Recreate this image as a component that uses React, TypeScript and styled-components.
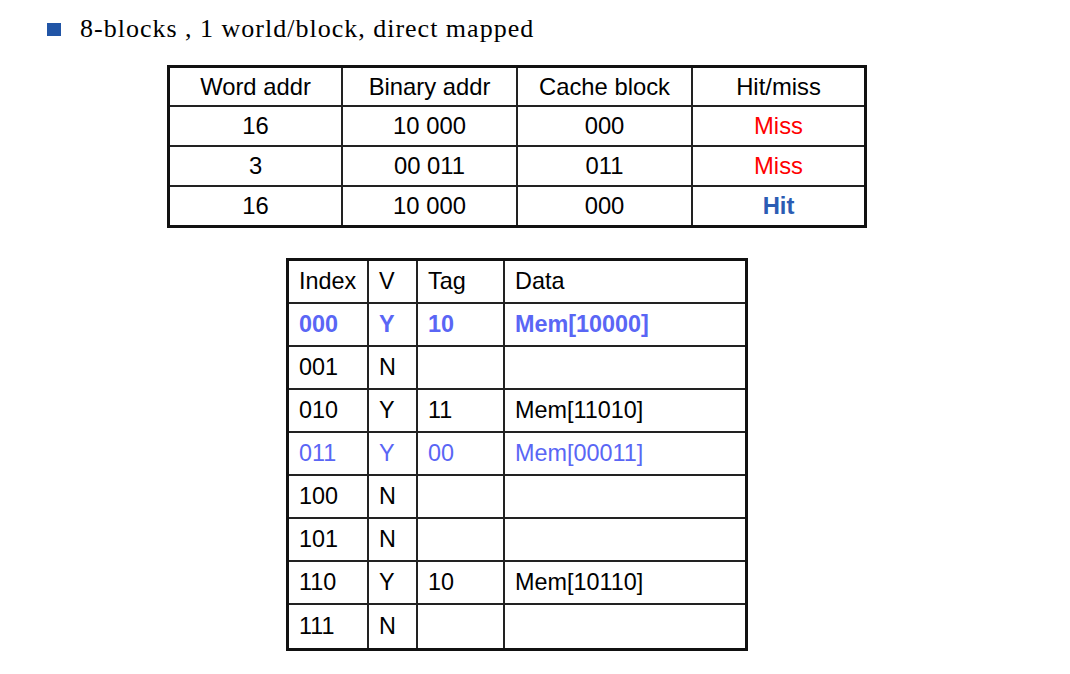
import React from "react";
import styled, { createGlobalStyle } from "styled-components";

const GlobalStyle = createGlobalStyle`
  html, body {
    margin: 0;
    padding: 0;
    background: #ffffff;
  }
`;

const lookups = [
  { word: "16", binary: "10 000", block: "000", result: "Miss" },
  { word: "3", binary: "00 011", block: "011", result: "Miss" },
  { word: "16", binary: "10 000", block: "000", result: "Hit" },
];

const cache = [
  { index: "000", valid: "Y", tag: "10", data: "Mem[10000]", tone: "new" },
  { index: "001", valid: "N", tag: "", data: "", tone: "plain" },
  { index: "010", valid: "Y", tag: "11", data: "Mem[11010]", tone: "plain" },
  { index: "011", valid: "Y", tag: "00", data: "Mem[00011]", tone: "recent" },
  { index: "100", valid: "N", tag: "", data: "", tone: "plain" },
  { index: "101", valid: "N", tag: "", data: "", tone: "plain" },
  { index: "110", valid: "Y", tag: "10", data: "Mem[10110]", tone: "plain" },
  { index: "111", valid: "N", tag: "", data: "", tone: "plain" },
];

const lookupHeads = ["Word addr", "Binary addr", "Cache block", "Hit/miss"];
const lookupWidths = [173, 175, 175, 171];
const cacheHeads = ["Index", "V", "Tag", "Data"];
const cacheWidths = [80, 49, 87, 240];

function App() {
  return (
    <Page>
      <GlobalStyle />
      <Heading>
        <Bullet />
        <HeadingText>8-blocks , 1 world/block, direct mapped</HeadingText>
      </Heading>

      <LookupTable>
        <thead>
          <tr>
            {lookupHeads.map((h, i) => (
              <LookupHead key={h} $w={lookupWidths[i]}>
                {h}
              </LookupHead>
            ))}
          </tr>
        </thead>
        <tbody>
          {lookups.map((row, i) => (
            <tr key={i}>
              <LookupCell>{row.word}</LookupCell>
              <LookupCell>{row.binary}</LookupCell>
              <LookupCell>{row.block}</LookupCell>
              <LookupCell>
                <Result $hit={row.result === "Hit"}>{row.result}</Result>
              </LookupCell>
            </tr>
          ))}
        </tbody>
      </LookupTable>

      <CacheTable>
        <thead>
          <tr>
            {cacheHeads.map((h, i) => (
              <CacheHead key={h} $w={cacheWidths[i]}>
                {h}
              </CacheHead>
            ))}
          </tr>
        </thead>
        <tbody>
          {cache.map((row) => (
            <CacheRow key={row.index} $tone={row.tone}>
              <CacheCell>{row.index}</CacheCell>
              <CacheCell>{row.valid}</CacheCell>
              <CacheCell>{row.tag}</CacheCell>
              <CacheCell>{row.data}</CacheCell>
            </CacheRow>
          ))}
        </tbody>
      </CacheTable>
    </Page>
  );
}

export default App;

const Page = styled.div`
  width: 1070px;
  height: 674px;
  padding-top: 15px;
  box-sizing: border-box;
  font-family: "Liberation Sans", Arial, sans-serif;
  color: #000000;
`;

const Heading = styled.div`
  display: flex;
  align-items: center;
  column-gap: 19px;
  margin-left: 47px;
  height: 28px;
`;

const Bullet = styled.div`
  width: 14px;
  height: 13px;
  background: #2155a6;
  margin-top: 1px;
`;

const HeadingText = styled.span`
  font-family: "Liberation Serif", "Times New Roman", serif;
  font-size: 26px;
  letter-spacing: 1px;
  line-height: 28px;
  color: #000000;
`;

const LookupTable = styled.table`
  border-collapse: separate;
  border-spacing: 0;
  table-layout: fixed;
  width: 700px;
  border: 3px solid #111111;
  margin: 22px 0 0 167px;
  box-sizing: border-box;
  font-size: 23.8px;

  tbody tr:last-child td {
    border-bottom: none;
    height: 38px;
  }
  th:last-child,
  td:last-child {
    border-right: none;
  }
`;

const LookupHead = styled.th<{ $w: number }>`
  box-sizing: border-box;
  width: ${(p) => p.$w}px;
  height: 39px;
  padding: 0;
  font-weight: normal;
  text-align: center;
  border-right: 2px solid #222222;
  border-bottom: 2px solid #222222;
`;

const LookupCell = styled.td`
  box-sizing: border-box;
  height: 40px;
  padding: 0;
  text-align: center;
  border-right: 2px solid #222222;
  border-bottom: 2px solid #222222;
`;

const Result = styled.span<{ $hit: boolean }>`
  color: ${(p) => (p.$hit ? "#2b5cb3" : "#ff0000")};
  font-weight: ${(p) => (p.$hit ? "bold" : "normal")};
`;

const CacheTable = styled.table`
  border-collapse: separate;
  border-spacing: 0;
  table-layout: fixed;
  width: 462px;
  border: 3px solid #111111;
  margin: 30px 0 0 286px;
  box-sizing: border-box;
  font-size: 23.4px;

  tbody tr:last-child td {
    border-bottom: none;
  }
  th:last-child,
  td:last-child {
    border-right: none;
  }
`;

const CacheHead = styled.th<{ $w: number }>`
  box-sizing: border-box;
  width: ${(p) => p.$w}px;
  height: 43px;
  padding: 0 0 0 10px;
  font-weight: normal;
  text-align: left;
  border-right: 2px solid #222222;
  border-bottom: 2px solid #222222;
`;

const CacheRow = styled.tr<{ $tone: string }>`
  color: ${(p) => (p.$tone === "plain" ? "#000000" : "#5a66f5")};
  font-weight: ${(p) => (p.$tone === "new" ? "bold" : "normal")};
`;

const CacheCell = styled.td`
  box-sizing: border-box;
  height: 43px;
  padding: 0 0 0 10px;
  text-align: left;
  border-right: 2px solid #222222;
  border-bottom: 2px solid #222222;
`;
